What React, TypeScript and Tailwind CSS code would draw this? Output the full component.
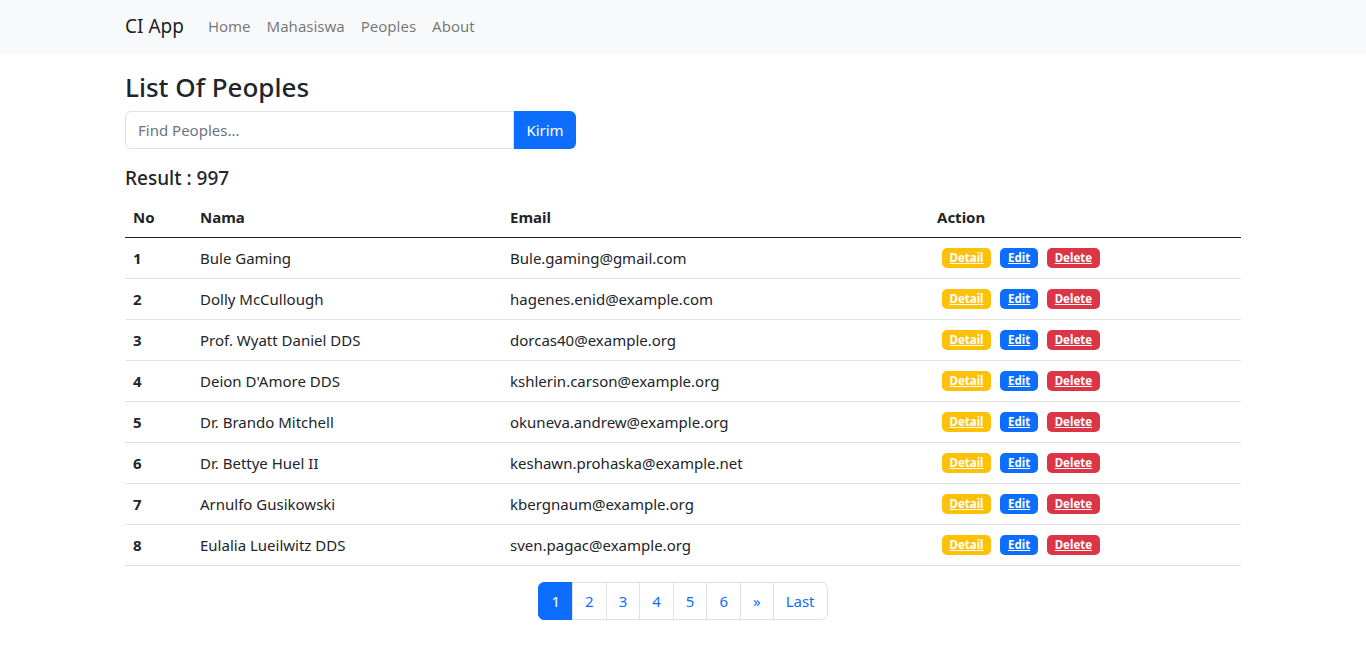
import { useState } from 'react';

type Person = { id: number; nama: string; email: string };

const people: Person[] = [
  { id: 1, nama: 'Bule Gaming', email: 'Bule.gaming@gmail.com' },
  { id: 2, nama: 'Dolly McCullough', email: 'hagenes.enid@example.com' },
  { id: 3, nama: 'Prof. Wyatt Daniel DDS', email: 'dorcas40@example.org' },
  { id: 4, nama: "Deion D'Amore DDS", email: 'kshlerin.carson@example.org' },
  { id: 5, nama: 'Dr. Brando Mitchell', email: 'okuneva.andrew@example.org' },
  { id: 6, nama: 'Dr. Bettye Huel II', email: 'keshawn.prohaska@example.net' },
  { id: 7, nama: 'Arnulfo Gusikowski', email: 'kbergnaum@example.org' },
  { id: 8, nama: 'Eulalia Lueilwitz DDS', email: 'sven.pagac@example.org' },
];

const pages = ['1', '2', '3', '4', '5', '6', '»', 'Last'];

export default function App() {
  const [keyword, setKeyword] = useState('');

  return (
    <div className="min-h-screen bg-white text-[15px] text-[#212529] font-['Noto_Sans',sans-serif]">
      {/* navbar */}
      <nav className="h-[54px] bg-[#f8f9fa]">
        <div className="mx-auto flex h-full w-[1116px] items-center pb-[2px]">
          <a href="#" className="mr-4 text-[19px] text-black/90">CI App</a>
          <div className="flex items-center text-[15px] text-black/55">
            <a href="#" className="px-2">Home</a>
            <a href="#" className="px-2">Mahasiswa</a>
            <a href="#" className="px-2">Peoples</a>
            <a href="#" className="px-2">About</a>
          </div>
        </div>
      </nav>

      <div className="mx-auto w-[1116px]">
        <h3 className="mt-[18px] text-[26px] font-medium leading-[1.2]">List Of Peoples</h3>

        <form className="mt-[8px] flex w-[451px]" onSubmit={(e) => e.preventDefault()}>
          <input
            type="text"
            value={keyword}
            onChange={(e) => setKeyword(e.target.value)}
            placeholder="Find Peoples..."
            className="h-[38px] flex-1 rounded-l-[6px] border border-[#dee2e6] px-3 text-[15px] placeholder:text-[#6c757d] outline-none"
          />
          <button className="h-[38px] w-[62px] rounded-r-[6px] bg-[#0d6efd] text-[15px] text-white">Kirim</button>
        </form>

        <h5 className="mt-[18px] text-[19px] font-medium leading-[1.2]">Result : 997</h5>

        <table className="mt-[8px] w-full border-collapse">
          <thead>
            <tr className="h-[40px] border-b border-[#212529]">
              <th className="w-[67px] px-2 text-left font-bold">No</th>
              <th className="w-[310px] px-2 text-left font-bold">Nama</th>
              <th className="w-[427px] px-2 text-left font-bold">Email</th>
              <th className="px-2 text-left font-bold">Action</th>
            </tr>
          </thead>
          <tbody>
            {people.map((p) => (
              <tr key={p.id} className="h-[41px] border-b border-[#dee2e6]">
                <th className="px-2 text-left font-bold">{p.id}</th>
                <td className="px-2">{p.nama}</td>
                <td className="px-2">{p.email}</td>
                <td className="px-2">
                  <div className="flex gap-[9px] pl-[5px]">
                    <a href="#" className="rounded-[5px] bg-[#ffc107] px-[7.5px] py-[4px] text-[11.5px] font-bold leading-[12px] text-white underline">Detail</a>
                    <a href="#" className="rounded-[5px] bg-[#0d6efd] px-[8px] py-[4px] text-[11.5px] font-bold leading-[12px] text-white underline">Edit</a>
                    <a href="#" className="rounded-[5px] bg-[#dc3545] px-[7.5px] py-[4px] text-[11.5px] font-bold leading-[12px] text-white underline">Delete</a>
                  </div>
                </td>
              </tr>
            ))}
          </tbody>
        </table>

        <div className="mt-4 flex justify-center">
          <ul className="flex">
            {pages.map((pg, i) => (
              <li key={pg}>
                <a
                  href="#"
                  className={
                    'flex h-[38px] items-center border px-3 ' +
                    (i === 0
                      ? 'rounded-l-[6px] border-[#0d6efd] bg-[#0d6efd] text-white'
                      : '-ml-px border-[#dee2e6] text-[#0d6efd]') +
                    (i === pages.length - 1 ? ' rounded-r-[6px]' : '')
                  }
                >
                  {pg}
                </a>
              </li>
            ))}
          </ul>
        </div>
      </div>
    </div>
  );
}
